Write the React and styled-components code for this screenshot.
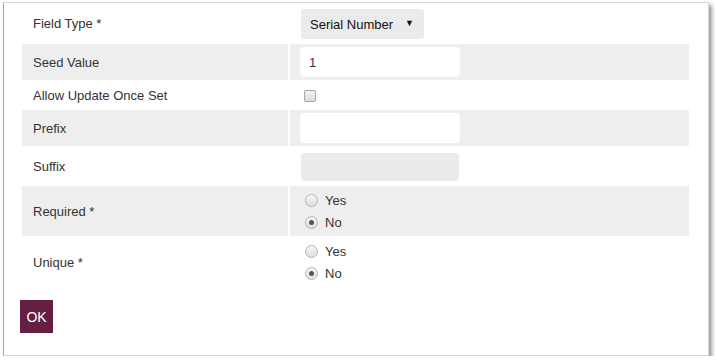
import React from 'react';
import styled, { createGlobalStyle } from 'styled-components';

const GlobalStyle = createGlobalStyle`
    body {
        margin: 0;
        background: #fff;
        font-family: "Liberation Sans", Arial, sans-serif;
    }
`;

const Panel = styled.div`
    box-sizing: border-box;
    width: 706px;
    height: 354px;
    margin: 2px 0 0 3px;
    padding: 0 16px;
    background: #fff;
    border: 1px solid #d6d6d6;
    border-left-color: #a8a8a8;
    box-shadow: 3px 3px 4px rgba(0, 0, 0, 0.4);
`;

const Form = styled.div`
    display: flex;
    flex-direction: column;
    width: 671px;
`;

const Row = styled.div`
    display: grid;
    grid-template-columns: 266px 399px;
    column-gap: 2px;
    padding: 0 2px;
    height: ${p => p.h}px;
`;

const Cell = styled.div`
    display: flex;
    align-items: center;
    background: ${p => (p.shaded ? '#eeeeee' : '#fff')};
`;

const Label = styled(Cell)`
    padding-left: 11px;
    font-size: 13px;
    color: #333;
`;

const Value = styled(Cell)`
    padding-left: 10px;
`;

const SelectWrap = styled.div`
    position: relative;
    margin-left: 1px;
    margin-top: 1px;
`;

const Select = styled.select`
    appearance: none;
    width: 123px;
    height: 30px;
    border: none;
    border-radius: 3px;
    background: #ebebeb;
    padding: 0 0 0 9px;
    font-family: inherit;
    font-size: 13px;
    color: #111;
`;

const Arrow = styled.span`
    position: absolute;
    right: 10px;
    top: 9px;
    font-size: 9px;
    color: #111;
    pointer-events: none;
`;

const TextInput = styled.input`
    box-sizing: border-box;
    width: ${p => (p.disabled ? 158 : 160)}px;
    height: ${p => (p.disabled ? 28 : 30)}px;
    margin-left: ${p => (p.disabled ? 1 : 0)}px;
    margin-top: ${p => (p.disabled ? 2 : 0)}px;
    border: none;
    border-radius: 4px;
    background: ${p => (p.disabled ? '#ebebeb' : '#fff')};
    padding: 0 9px;
    font-family: inherit;
    font-size: 13px;
    color: #333;
    outline: none;
`;

const Check = styled.span`
    box-sizing: border-box;
    width: 12px;
    height: 12px;
    margin: 1px 0 0 4px;
    border: 1px solid #a5a5a5;
    border-radius: 2px;
    background: linear-gradient(#f4f4f4, #dcdcdc);
`;

const RadioGroup = styled.div`
    display: flex;
    flex-direction: column;
    padding-top: ${p => p.top}px;
`;

const RadioLine = styled.label`
    display: flex;
    align-items: center;
    height: 22px;
    font-size: 13px;
    color: #333;
`;

const Radio = styled.span`
    box-sizing: border-box;
    display: flex;
    align-items: center;
    justify-content: center;
    width: 13px;
    height: 13px;
    margin: 0 7px 0 5px;
    border: 1px solid #b3b3b3;
    border-radius: 50%;
    background: linear-gradient(#f6f6f6, #dedede);

    &::after {
        content: '';
        display: ${p => (p.checked ? 'block' : 'none')};
        width: 5px;
        height: 5px;
        border-radius: 50%;
        background: #555;
    }
`;

const OkButton = styled.button`
    width: 33px;
    height: 33px;
    margin-top: 12px;
    border: none;
    padding: 0;
    background: #661f42;
    color: #fff;
    font-family: inherit;
    font-size: 14px;
`;

const YesNo = ({ top }) => (
    <RadioGroup top={top}>
        <RadioLine>
            <Radio />
            Yes
        </RadioLine>
        <RadioLine>
            <Radio checked />
            No
        </RadioLine>
    </RadioGroup>
);

const App = () => (
    <>
        <GlobalStyle />
        <Panel>
            <Form>
                <Row h={41}>
                    <Label>Field Type *</Label>
                    <Value>
                        <SelectWrap>
                            <Select defaultValue="serial">
                                <option value="serial">Serial Number</option>
                            </Select>
                            <Arrow>▼</Arrow>
                        </SelectWrap>
                    </Value>
                </Row>
                <Row h={36}>
                    <Label shaded>Seed Value</Label>
                    <Value shaded>
                        <TextInput defaultValue="1" />
                    </Value>
                </Row>
                <Row h={30}>
                    <Label>Allow Update Once Set</Label>
                    <Value>
                        <Check />
                    </Value>
                </Row>
                <Row h={36}>
                    <Label shaded>Prefix</Label>
                    <Value shaded>
                        <TextInput />
                    </Value>
                </Row>
                <Row h={40}>
                    <Label>Suffix</Label>
                    <Value>
                        <TextInput disabled />
                    </Value>
                </Row>
                <Row h={50}>
                    <Label shaded>Required *</Label>
                    <Value shaded>
                        <YesNo top={0} />
                    </Value>
                </Row>
                <Row h={52}>
                    <Label>Unique *</Label>
                    <Value>
                        <YesNo top={1} />
                    </Value>
                </Row>
            </Form>
            <OkButton>OK</OkButton>
        </Panel>
    </>
);

export default App;
